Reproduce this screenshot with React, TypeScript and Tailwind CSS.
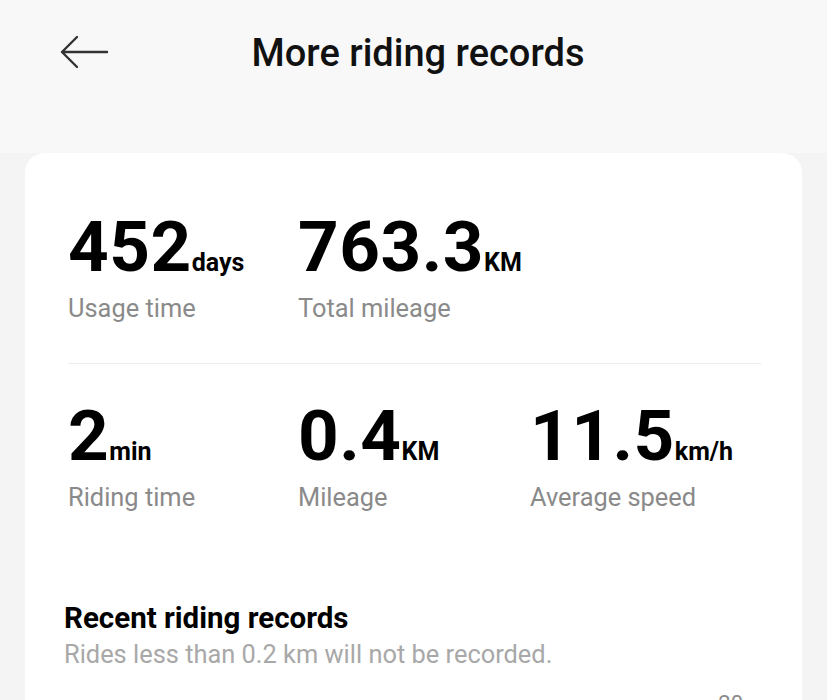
// More riding records screen: header with back arrow, stats card, recent records heading.

const font = "font-['Roboto',_'Liberation_Sans',_sans-serif]";

type Stat = { value: string; unit: string; label: string; width: string };

const TOP_STATS: Stat[] = [
  { value: "452", unit: "days", label: "Usage time", width: "w-[230px]" },
  { value: "763.3", unit: "KM", label: "Total mileage", width: "w-[232px]" },
];

const RIDE_STATS: Stat[] = [
  { value: "2", unit: "min", label: "Riding time", width: "w-[230px]" },
  { value: "0.4", unit: "KM", label: "Mileage", width: "w-[232px]" },
  { value: "11.5", unit: "km/h", label: "Average speed", width: "w-[200px]" },
];

function StatCell({ stat }: { stat: Stat }) {
  return (
    <div className={`${stat.width} shrink-0 flex flex-col`}>
      <div className="flex items-baseline">
        <span className="text-[71px] leading-[70px] font-bold text-black tracking-[0.5px]">
          {stat.value}
        </span>
        <span className="text-[25px] leading-[30px] font-bold text-black">
          {stat.unit}
        </span>
      </div>
      <span className="mt-[11px] text-[25.4px] leading-[30px] text-[#8a8a8a]">
        {stat.label}
      </span>
    </div>
  );
}

function BackArrow() {
  return (
    <svg width="50" height="36" viewBox="0 0 50 36" fill="none">
      <path
        d="M2 18 H47 M17 3 L2 18 L17 33"
        stroke="#333"
        strokeWidth="2.4"
        strokeLinecap="round"
        strokeLinejoin="round"
      />
    </svg>
  );
}

export default function App() {
  return (
    <div className={`${font} w-[827px] h-[700px] overflow-hidden bg-[#f4f4f4]`}>
      {/* Header */}
      <div className="h-[153px] bg-[#f8f8f8] relative">
        <div className="flex items-start pt-[34px]">
          <div className="absolute left-[60px] top-[34px]">
            <BackArrow />
          </div>
          <h1 className="w-full text-center text-[38px] leading-[39px] font-medium text-[#111] pl-[9px]">
            More riding records
          </h1>
        </div>
      </div>

      {/* Card */}
      <div className="mx-[25px] bg-white rounded-[20px] pt-[59px] h-[600px]">
        <div className="pl-[43px] pr-[41px]">
          <div className="flex">
            {TOP_STATS.map((s) => (
              <StatCell key={s.label} stat={s} />
            ))}
          </div>
          <div className="mt-[40px] h-px bg-[#ececec]" />
          <div className="flex mt-[37px]">
            {RIDE_STATS.map((s) => (
              <StatCell key={s.label} stat={s} />
            ))}
          </div>
        </div>

        {/* Recent records */}
        <div className="pl-[39px] pr-[41px] mt-[90px]">
          <h2 className="text-[29.5px] leading-[32px] font-bold text-black">
            Recent riding records
          </h2>
          <p className="mt-[5px] text-[25.4px] leading-[30px] text-[#a8a8a8]">
            Rides less than 0.2 km will not be recorded.
          </p>
          <div className="flex justify-end pr-[18px] mt-[21px]">
            <span className="text-[22px] leading-[28px] text-[#8a8a8a]">20</span>
          </div>
        </div>
      </div>
    </div>
  );
}
